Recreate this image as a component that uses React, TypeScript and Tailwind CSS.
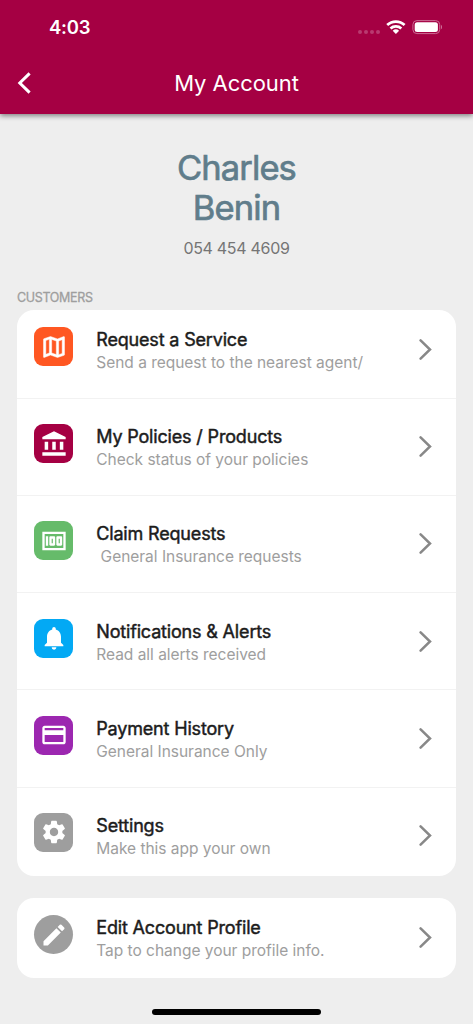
import type { IconType } from 'react-icons';
import {
  MdAccountBalance,
  MdCreditCard,
  MdEdit,
  MdMoney,
  MdNotifications,
  MdOutlineMap,
  MdSettings,
} from 'react-icons/md';

type Item = {
  icon: IconType;
  badge: string;
  title: string;
  subtitle: string;
  pad: string;
};

const items: Item[] = [
  { icon: MdOutlineMap, badge: 'rounded-[9px] bg-[#ff5722] [&_path:last-child]:[stroke-width:0.4]', title: 'Request a Service', subtitle: 'Send a request to the nearest agent/', pad: 'h-[88.5px] pt-[17.25px]' },
  { icon: MdAccountBalance, badge: 'rounded-[9px] bg-[#a50043]', title: 'My Policies / Products', subtitle: 'Check status of your policies', pad: 'h-[97.25px] pt-[25.6px]' },
  { icon: MdMoney, badge: 'rounded-[9px] bg-[#66bb6a]', title: 'Claim Requests', subtitle: ' General Insurance requests', pad: 'h-[97.25px] pt-[25.6px]' },
  { icon: MdNotifications, badge: 'rounded-[9px] bg-[#03a9f4]', title: 'Notifications & Alerts', subtitle: 'Read all alerts received', pad: 'h-[97.25px] pt-[25.6px]' },
  { icon: MdCreditCard, badge: 'rounded-[9px] bg-[#9c27b0]', title: 'Payment History', subtitle: 'General Insurance Only', pad: 'h-[97.25px] pt-[25.6px]' },
  { icon: MdSettings, badge: 'rounded-[9px] bg-[#9e9e9e]', title: 'Settings', subtitle: 'Make this app your own', pad: 'h-[88.5px] pt-[25.25px]' },
];

const profile: Item = {
  icon: MdEdit,
  badge: 'rounded-full bg-[#9e9e9e]',
  title: 'Edit Account Profile',
  subtitle: 'Tap to change your profile info.',
  pad: 'h-[79.5px] pt-[17px]',
};

function Row({ item }: { item: Item }) {
  const Icon = item.icon;
  return (
    <div className={`flex items-start pl-[17.25px] pr-[24px] ${item.pad}`}>
      <div className={`flex size-[39px] shrink-0 items-center justify-center text-white [&_svg]:[stroke-width:0] ${item.badge}`}>
        <Icon size={28} />
      </div>
      <div className="ml-[23px] flex-1 whitespace-pre">
        <div className="text-[18px] leading-[26px] tracking-[-0.17px] text-[#1c1c1c] [-webkit-text-stroke:0.45px_#1c1c1c]">{item.title}</div>
        <div className="text-[15.5px] leading-[19px] tracking-[-0.02px] text-[#9e9e9e]">{item.subtitle}</div>
      </div>
      <svg className="mt-[12px] h-[21px] w-[13px] shrink-0" viewBox="0 0 13 21" fill="none" stroke="#888888" strokeWidth="2.5" strokeLinecap="round">
        <path d="M1.6 1.4 11 10.5 1.6 19.6" />
      </svg>
    </div>
  );
}

export default function App() {
  return (
    <div className="flex h-[1024px] w-full flex-col bg-[#eeeeee] font-['Inter',sans-serif]">
      <header className="flex h-[114px] shrink-0 flex-col bg-[#a50043] text-white shadow-[0_2px_5px_rgba(0,0,0,0.45)]">
        <div className="flex h-[54px] items-center pl-[49px] pr-[31px]">
          <span className="text-[18.5px] font-semibold leading-6 tracking-[-0.25px]">4:03</span>
          <svg className="ml-auto h-[18px] w-[86px]" viewBox="0 0 86 18" fill="none">
            <g fill="#b93a70">
              <circle cx="4" cy="14" r="2" />
              <circle cx="10" cy="14" r="2" />
              <circle cx="16" cy="14" r="2" />
              <circle cx="22" cy="14" r="2" />
            </g>
            <g stroke="white" strokeWidth="2.7">
              <path d="M31.2 7.1a12.6 12.6 0 0 1 17.4 0" />
              <path d="M34.5 10.5a7.9 7.9 0 0 1 10.8 0" />
            </g>
            <path d="M36.7 12.8a4.7 4.7 0 0 1 6.4 0L39.9 16Z" fill="white" />
            <rect x="56.9" y="2.6" width="26.8" height="13" rx="4" stroke="#cc6a94" />
            <rect x="58.7" y="4.2" width="23.2" height="9.8" rx="2.5" fill="white" />
            <path d="M84.9 7v4.2c.8-.3 1.4-1.1 1.4-2.1s-.6-1.8-1.4-2.1Z" fill="#cc6a94" />
          </svg>
        </div>
        <div className="grid h-[58px] grid-cols-[60px_1fr_60px] items-center">
          <svg className="ml-[17px] h-[22px] w-[15px]" viewBox="0 0 15 22" fill="none" stroke="white" strokeWidth="3">
            <path d="M12.6 1.4 2.8 11l9.8 9.6" />
          </svg>
          <h1 className="text-center text-[22px] leading-7 tracking-[-0.05px]">My Account</h1>
        </div>
      </header>

      <section className="flex flex-col items-center pt-[34px]">
        <h2 className="text-center text-[34.5px] leading-[40px] tracking-[-0.9px] text-[#607d8b] [-webkit-text-stroke:0.7px_#607d8b]">
          Charles<br />Benin
        </h2>
        <p className="mt-[10px] text-[16px] leading-5 tracking-[-0.3px] text-[#757575]">054 454 4609</p>
      </section>

      <main className="px-[17px]">
        <div className="mt-[31px] h-[21px] text-[12.5px] leading-[18px] tracking-[-0.32px] text-[#9e9e9e] [-webkit-text-stroke:0.3px_#9e9e9e]">CUSTOMERS</div>
        <div className="divide-y divide-[#f2f2f2] overflow-hidden rounded-[17px] bg-white">
          {items.map((item) => <Row key={item.title} item={item} />)}
        </div>
        <div className="mt-[22px] rounded-[17px] bg-white">
          <Row item={profile} />
        </div>
      </main>

      <div className="mx-auto mb-[9px] mt-auto h-[6px] w-[169px] rounded-full bg-black" />
    </div>
  );
}
